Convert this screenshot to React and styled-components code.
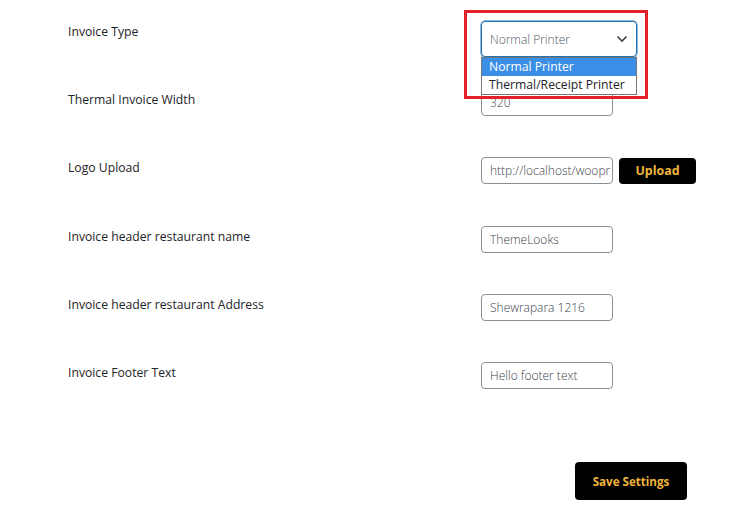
import React from "react";
import styled, { createGlobalStyle } from "styled-components";

const GlobalStyle = createGlobalStyle`
  body {
    margin: 0;
    background: #ffffff;
    font-family: "Open Sans", "Noto Sans", sans-serif;
    color: #1d2327;
  }
`

const Page = styled.div`
  padding: 21px 0 0 68px;
  width: 739px;
  height: 523px;
  box-sizing: border-box;
`

const Row = styled.div`
  display: grid;
  grid-template-columns: 413px auto;
  height: 68px;
  align-items: start;
`

const Label = styled.div`
  font-size: 12.2px;
  font-weight: 500;
  line-height: 20px;
  padding-top: ${props => (props.offset || 0) + 1}px;
  color: #1d2327;
`

const Field = styled.div`
  display: flex;
  align-items: center;
  gap: 6px;
  padding-top: ${props => props.offset || 0}px;
`

const TextInput = styled.div`
  width: 132px;
  height: 27px;
  box-sizing: border-box;
  border: 1px solid #8c8f94;
  border-radius: 4px;
  padding: 0 8px;
  font-size: 12px;
  font-weight: 300;
  line-height: 25px;
  color: #3c434a;
  white-space: nowrap;
  overflow: hidden;
`

const SelectWrap = styled.div`
  position: relative;
`

const Select = styled.div`
  width: 156px;
  height: 36px;
  box-sizing: border-box;
  border: 1px solid #2271b1;
  border-radius: 4px;
  box-shadow: 0 0 0 0.5px #2271b1;
  padding: 0 8px;
  display: flex;
  align-items: center;
  justify-content: space-between;
  font-size: 12px;
  font-weight: 300;
  color: #50575e;
`

const Highlight = styled.div`
  position: absolute;
  left: -17px;
  top: -11px;
  width: 184px;
  height: 89px;
  box-sizing: border-box;
  border: 3px solid #e4202a;
  pointer-events: none;
`

const Menu = styled.div`
  position: absolute;
  left: 0;
  top: 36px;
  width: 156px;
  box-sizing: border-box;
  border: 1px solid #767676;
  background: #ffffff;
  z-index: 2;
`

const Option = styled.div`
  height: 18px;
  line-height: 18px;
  padding: 0 7px;
  font-size: 12.2px;
  background: ${props => props.active ? "#3a8ee6" : "#ffffff"};
  color: ${props => props.active ? "#ffffff" : "#1d2327"};
`

const BlackButton = styled.div`
  background: #000000;
  color: #f0b43c;
  font-weight: 700;
  font-size: ${props => props.big ? "11.6px" : "12.4px"};
  width: ${props => props.big ? "112px" : "77px"};
  height: ${props => props.big ? "38px" : "26px"};
  border-radius: 4px;
  display: flex;
  align-items: center;
  justify-content: center;
`

const Footer = styled.div`
  padding: 33px 0 0 507px;
`

const Chevron = () => (
  <svg width="12" height="8" viewBox="0 0 12 8">
    <path d="M1.5 1.5 L6 6 L10.5 1.5" fill="none" stroke="#3c434a" strokeWidth="1.6" />
  </svg>
)

const rows = [
  { label: "Logo Upload", value: "http://localhost/woopr", upload: true },
  { label: "Invoice header restaurant name", value: "ThemeLooks", offset: 1 },
  { label: "Invoice header restaurant Address", value: "Shewrapara 1216", offset: 1 },
  { label: "Invoice Footer Text", value: "Hello footer text", offset: 1 },
]

export default function App() {
  return (
    <Page>
      <GlobalStyle />
      <Row>
        <Label>Invoice Type</Label>
        <Field>
          <SelectWrap>
            <Select>
              <span>Normal Printer</span>
              <Chevron />
            </Select>
            <Menu>
              <Option active>Normal Printer</Option>
              <Option>Thermal/Receipt Printer</Option>
            </Menu>
            <Highlight />
          </SelectWrap>
        </Field>
      </Row>
      <Row>
        <Label>Thermal Invoice Width</Label>
        <Field offset={-1}>
          <TextInput>320</TextInput>
        </Field>
      </Row>
      {rows.map((r, i) => (
        <Row key={i}>
          <Label offset={r.offset}>{r.label}</Label>
          <Field offset={r.offset}>
            <TextInput>{r.value}</TextInput>
            {r.upload && <BlackButton>Upload</BlackButton>}
          </Field>
        </Row>
      ))}
      <Footer>
        <BlackButton big>Save Settings</BlackButton>
      </Footer>
    </Page>
  )
}
